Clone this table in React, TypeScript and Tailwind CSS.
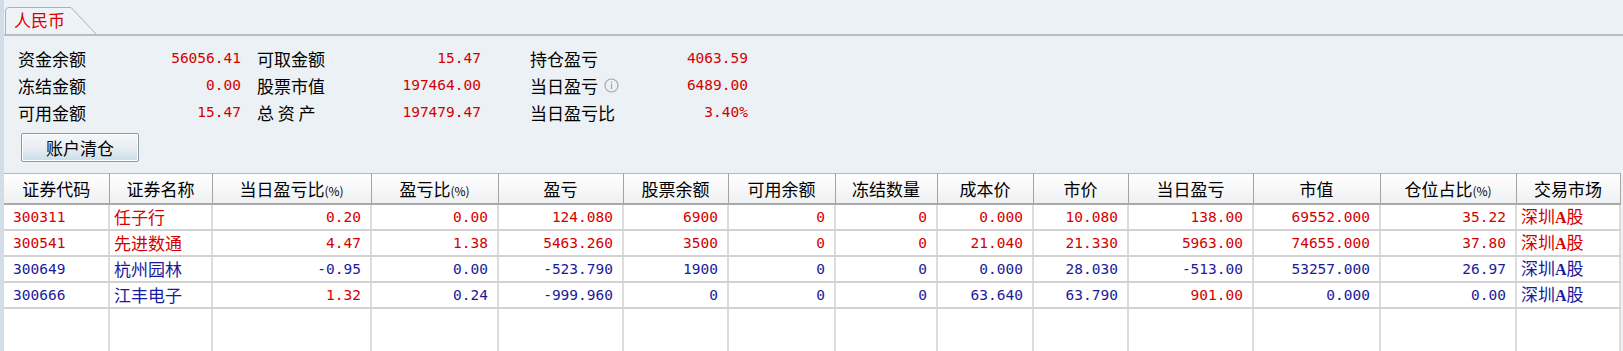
import React from "react";

const RED = "text-[#d40000]";
const BLUE = "text-[#1a1a9c]";

const columns: { title: string; suffix?: string; width: number }[] = [
  { title: "证券代码", width: 105 },
  { title: "证券名称", width: 103 },
  { title: "当日盈亏比", suffix: "(%)", width: 159 },
  { title: "盈亏比", suffix: "(%)", width: 127 },
  { title: "盈亏", width: 125 },
  { title: "股票余额", width: 105 },
  { title: "可用余额", width: 107 },
  { title: "冻结数量", width: 102 },
  { title: "成本价", width: 96 },
  { title: "市价", width: 95 },
  { title: "当日盈亏", width: 125 },
  { title: "市值", width: 127 },
  { title: "仓位占比", suffix: "(%)", width: 136 },
  { title: "交易市场", width: 104 },
];

type Row = { color: "r" | "b"; cells: string[]; red?: number[] };

const rows: Row[] = [
  {
    color: "r",
    cells: ["300311", "任子行", "0.20", "0.00", "124.080", "6900", "0", "0", "0.000", "10.080", "138.00", "69552.000", "35.22"],
  },
  {
    color: "r",
    cells: ["300541", "先进数通", "4.47", "1.38", "5463.260", "3500", "0", "0", "21.040", "21.330", "5963.00", "74655.000", "37.80"],
  },
  {
    color: "b",
    cells: ["300649", "杭州园林", "-0.95", "0.00", "-523.790", "1900", "0", "0", "0.000", "28.030", "-513.00", "53257.000", "26.97"],
  },
  {
    color: "b",
    cells: ["300666", "江丰电子", "1.32", "0.24", "-999.960", "0", "0", "0", "63.640", "63.790", "901.00", "0.000", "0.00"],
    red: [2, 10],
  },
];

const summary = [
  ["资金余额", "56056.41", "可取金额", "15.47", "持仓盈亏", "4063.59"],
  ["冻结金额", "0.00", "股票市值", "197464.00", "当日盈亏", "6489.00"],
  ["可用金额", "15.47", "总 资 产", "197479.47", "当日盈亏比", "3.40%"],
];

const mono = "font-['DejaVu_Sans_Mono','Noto_Sans_CJK_SC',monospace] text-[14.5px]";

const InfoIcon = () => (
  <svg width="15" height="15" viewBox="0 0 15 15" className="ml-[6px]">
    <circle cx="7.5" cy="7.5" r="6.5" fill="none" stroke="#a8a8a8" strokeWidth="1.2" />
    <rect x="6.9" y="3.6" width="1.3" height="1.4" fill="#a8a8a8" />
    <rect x="6.9" y="6" width="1.3" height="5.2" fill="#a8a8a8" />
  </svg>
);

export default function App() {
  return (
    <div className="w-[1623px] h-[351px] overflow-hidden bg-[#ebf1f5] border-l-4 border-l-[#d3dde8] font-['Noto_Sans_CJK_SC',sans-serif] text-black">
      {/* Tab bar */}
      <div className="h-[36px] flex items-end border-b-2 border-b-[#b4bec8] pl-px">
        <div className="relative w-[92px] h-[27px]">
          <svg width="92" height="27" className="absolute left-0 top-0">
            <path d="M0.5 27 V4 Q0.5 0.5 4 0.5 H66 L91 27" fill="#eef3f7" stroke="#a9b2bb" strokeWidth="1" />
          </svg>
          <span className="absolute left-[9px] top-[1px] text-[17px] leading-[24px] text-[#e00000]">人民币</span>
        </div>
      </div>

      {/* Summary */}
      <div className="pt-[9px] pl-[14px]">
        {summary.map((r, i) => (
          <div key={i} className="flex items-center h-[27px] text-[17px]">
            <span className="w-[72px]">{r[0]}</span>
            <span className={`w-[151px] text-right ${mono} ${RED}`}>{r[1]}</span>
            <span className="w-[120px] ml-[16px] whitespace-pre">{r[2]}</span>
            <span className={`w-[104px] text-right ${mono} ${RED}`}>{r[3]}</span>
            <span className="w-[110px] ml-[49px] flex items-center">
              {r[4]}
              {i === 1 && <InfoIcon />}
            </span>
            <span className={`w-[108px] text-right ${mono} ${RED}`}>{r[5]}</span>
          </div>
        ))}
        <button className="mt-[7px] ml-[3px] w-[118px] h-[29px] border border-[#8d9aa6] rounded-[2px] bg-gradient-to-b from-[#f6f8fa] via-[#e9eef2] to-[#c8dee9] text-[17px] shadow-[inset_0_0_0_1px_#ffffff]">
          账户清仓
        </button>
      </div>

      {/* Positions table */}
      <div className="mt-[11px] bg-white w-[1616px]">
        <table className="border-collapse table-fixed w-[1616px]">
          <colgroup>
            {columns.map((c) => (
              <col key={c.title} style={{ width: c.width }} />
            ))}
          </colgroup>
          <thead>
            <tr className="h-[30px] bg-gradient-to-b from-[#ffffff] to-[#eef0f2]">
              {columns.map((c) => (
                <th
                  key={c.title}
                  className="border-t border-t-[#b0b8c0] border-b-2 border-b-[#a9a9a9] border-r border-r-[#a4a4a4] font-normal text-[17px] text-center p-0"
                >
                  {c.title}
                  {c.suffix && <span className="text-[12px]">{c.suffix}</span>}
                </th>
              ))}
            </tr>
          </thead>
          <tbody>
            {rows.map((row) => (
              <tr key={row.cells[0]} className="h-[25px]">
                {row.cells.map((v, i) => {
                  const color = row.color === "r" || row.red?.includes(i) ? RED : BLUE;
                  const align =
                    i === 0 ? `text-left pl-[9px] ${mono}` : i === 1 ? "text-left pl-[4px] text-[17px]" : `text-right pr-[9px] ${mono}`;
                  return (
                    <td key={i} className={`border-b-2 border-b-[#d2d2d2] border-r-2 border-r-[#dcdcdc] p-0 leading-[22px] ${align} ${color}`}>
                      {v}
                    </td>
                  );
                })}
                <td className={`border-b-2 border-b-[#d2d2d2] border-r-2 border-r-[#dcdcdc] pl-[4px] text-[17px] leading-[22px] ${row.color === "r" ? RED : BLUE}`}>
                  深圳<span className="font-['Liberation_Serif',serif] font-bold text-[16px]">A</span>股
                </td>
              </tr>
            ))}
            <tr className="h-[60px]">
              {columns.map((c) => (
                <td key={c.title} className="border-r-2 border-r-[#dcdcdc] p-0" />
              ))}
            </tr>
          </tbody>
        </table>
      </div>
    </div>
  );
}
